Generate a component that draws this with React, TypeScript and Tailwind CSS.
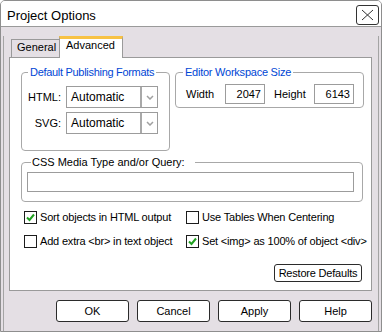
import React from "react";

const Check = ({ checked }: { checked: boolean }) => (
  <span className="w-[13px] h-[13px] border border-[#1c1c1c] bg-white flex items-center justify-center shrink-0">
    {checked && (
      <svg width="9" height="9" viewBox="0 0 9 9">
        <path d="M1 4.5 L3.5 7 L8 1.5" fill="none" stroke="#21a121" strokeWidth="2" />
      </svg>
    )}
  </span>
);

const CheckRow = ({ checked, label }: { checked: boolean; label: string }) => (
  <label className="flex items-center gap-[3px] h-[13px] leading-[13px] whitespace-nowrap tracking-[-0.18px]">
    <Check checked={checked} />
    <span>{label}</span>
  </label>
);

const Select = ({ value }: { value: string }) => (
  <div className="flex w-[92px] h-[22px] border border-[#9c9c9c] bg-white">
    <span className="flex-1 pl-[4px] leading-[20px] text-[12px]">{value}</span>
    <span className="w-[17px] h-full border-l-2 border-[#a9a9a9] flex items-center justify-center">
      <svg width="8" height="5" viewBox="0 0 8 5">
        <path d="M1 1 L4 4 L7 1" fill="none" stroke="#a0a0a0" strokeWidth="1.5" />
      </svg>
    </span>
  </div>
);

const NumBox = ({ value }: { value: string }) => (
  <div className="w-[40px] h-[20px] border border-[#9c9c9c] bg-white text-right pr-[3px] leading-[18px]">
    {value}
  </div>
);

const DlgButton = ({ label }: { label: string }) => (
  <button className="w-[73px] h-[22px] border border-[#2b2b2b] rounded-[3px] bg-white leading-[20px]">
    {label}
  </button>
);

export default function App() {
  return (
    <div className="w-[382px] h-[332px] bg-[#e4dfe4] border border-[#8e8e8e] rounded-t-[5px] overflow-hidden font-['Liberation_Sans',Arial,sans-serif] text-[11px] text-black">
      <div className="flex items-start justify-between h-[26px] bg-white border-b border-[#9a9a9a] pl-[6px] pr-[2px]">
        <span className="mt-[7px] text-[13px] leading-[16px]">Project Options</span>
        <button className="mt-[4px] w-[23px] h-[20px] border border-[#333] rounded-[3px] bg-white flex items-center justify-center">
          <svg width="13" height="12" viewBox="0 0 13 12">
            <path d="M1 1 L12 11 M12 1 L1 11" stroke="#333" strokeWidth="1" fill="none" />
          </svg>
        </button>
      </div>

      <div className="mx-[2px] h-[301px] border-x border-b border-[#a4a4a4]">
        <div className="flex items-end h-[22px] mt-[9px] pl-[7px] -mb-px relative z-10">
          <div className="self-start mt-[3px] w-[48px] h-[18px] border-l border-t border-[#9a9a9a] pl-[5px] leading-[15px]">
            General
          </div>
          <div className="w-[64px] h-full bg-white border-l border-r border-[#9a9a9a] border-t-[3px] border-t-[#f7c244] pl-[6px] leading-[12px]">
            Advanced
          </div>
        </div>

        <div className="ml-[5px] w-[363px] h-[234px] bg-white border border-[#9a9a9a] pt-[8px] pl-[11px] pr-[7px]">
          <div className="flex items-start">
            <fieldset className="w-[149px] border border-[#a8a8a8] rounded-[4px]">
              <legend className="ml-[6px] px-[2px] leading-[13px] text-[#0046d5] tracking-[-0.3px]">Default Publishing Formats</legend>
              <div className="pt-[7px] pl-[6px] pb-[16px] flex flex-col gap-[4px]">
                <div className="flex items-center">
                  <span className="w-[33px] text-right mr-[5px]">HTML:</span>
                  <Select value="Automatic" />
                </div>
                <div className="flex items-center">
                  <span className="w-[33px] text-right mr-[5px]">SVG:</span>
                  <Select value="Automatic" />
                </div>
              </div>
            </fieldset>
            <fieldset className="ml-[5px] w-[189px] border border-[#a8a8a8] rounded-[4px]">
              <legend className="ml-[7px] px-[2px] leading-[13px] text-[#0046d5] tracking-[-0.24px]">Editor Workspace Size</legend>
              <div className="pt-[5px] pl-[10px] pb-[3px] flex items-center">
                <span className="w-[39px]">Width</span>
                <NumBox value="2047" />
                <span className="ml-[9px] w-[40px]">Height</span>
                <NumBox value="6143" />
              </div>
            </fieldset>
          </div>

          <fieldset className="mt-[5px] mr-[1px] border border-[#a8a8a8] rounded-[4px]">
            <legend className="ml-[9px] pl-[1px] pr-[10px] leading-[13px]">CSS Media Type and/or Query:</legend>
            <div className="pt-[3px] pl-[5px] pr-[8px] pb-[9px]">
              <div className="h-[20px] border border-[#9c9c9c] bg-white" />
            </div>
          </fieldset>

          <div className="mt-[9px] pl-[3px] grid grid-cols-[162px_1fr] gap-y-[11px]">
            <CheckRow checked label="Sort objects in HTML output" />
            <CheckRow checked={false} label="Use Tables When Centering" />
            <CheckRow checked={false} label="Add extra <br> in text object" />
            <CheckRow checked label="Set <img> as 100% of object <div>" />
          </div>

          <div className="flex justify-end mt-[16px] mr-[2px]">
            <button className="w-[88px] h-[18px] border border-[#2b2b2b] rounded-[3px] bg-white leading-[16px] tracking-[-0.2px]">
              Restore Defaults
            </button>
          </div>
        </div>

        <div className="flex justify-end gap-[8px] mt-[9px] pr-[6px]">
          <DlgButton label="OK" />
          <DlgButton label="Cancel" />
          <DlgButton label="Apply" />
          <DlgButton label="Help" />
        </div>
      </div>
    </div>
  );
}
